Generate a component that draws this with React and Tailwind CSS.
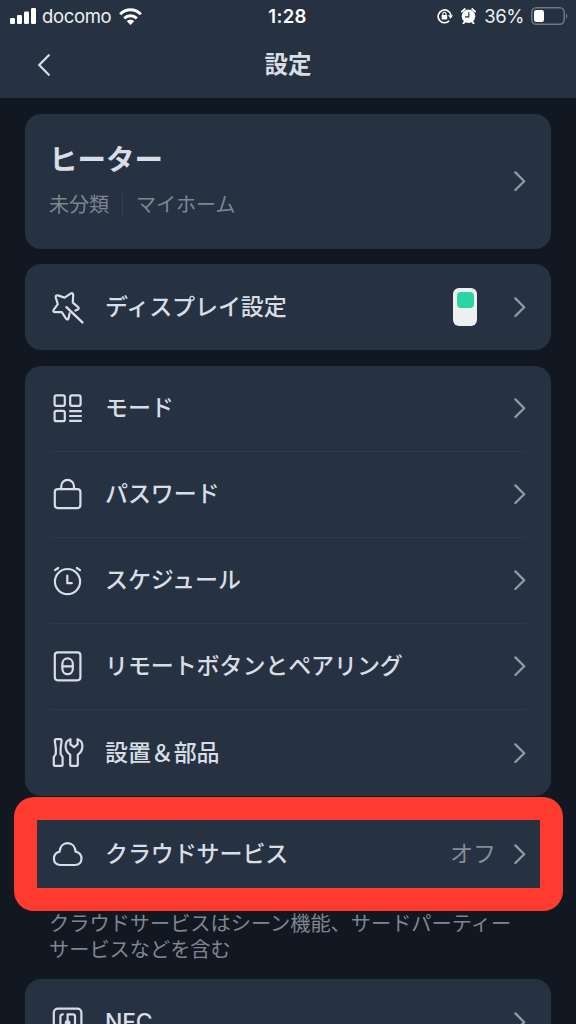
import React from "react";

function Icon({ children }) {
  return (
    <svg
      className="w-[35px] h-[35px] shrink-0"
      viewBox="0 0 35 35"
      fill="none"
      stroke="currentColor"
      strokeWidth="2.2"
      strokeLinecap="round"
      strokeLinejoin="round"
    >
      {children}
    </svg>
  );
}

const DisplayIcon = () => (
  <Icon>
    <path d="M25.4 20.6L27.8 19.4Q29.6 18.2 27.8 16.8L22.8 12.6L23.2 4.8Q22.8 2.2 20.6 3.6L14.6 7.6L7.8 5.4Q5.2 5.2 5.8 7.6L7.8 14.2L3.6 19.8Q2.6 22.2 5.2 22.2L11.8 22.2L16.2 28.8Q17.8 30.6 18.6 28.2L19.6 23.4" />
    <path d="M16.4 17.2L32.4 32.4" strokeWidth="2.4" />
  </Icon>
);

const ModeIcon = () => (
  <Icon>
    <rect x="4.6" y="4.3" width="10.2" height="10.6" rx="1.8" />
    <rect x="20.2" y="4.3" width="10.4" height="10.6" rx="1.8" />
    <rect x="4.6" y="19.8" width="10.2" height="10.4" rx="1.8" />
    <path d="M19.2 20.2H31.8M19.2 25H31.8M19.2 29.8H31.8" strokeLinecap="butt" />
  </Icon>
);

const LockIcon = () => (
  <Icon>
    <rect x="4.8" y="12.1" width="25.6" height="19" rx="3" />
    <path d="M11.2 12.1V9.4a6.4 6.6 0 0 1 12.8 0v2.7" />
  </Icon>
);

const ClockIcon = () => (
  <Icon>
    <circle cx="17.5" cy="18.6" r="12.6" />
    <path d="M17.3 12.6V20.2H21.8M5 7.2L8.2 5M30 7.2L26.8 5" />
  </Icon>
);

const RemoteIcon = () => (
  <Icon>
    <rect x="4.8" y="3.3" width="25.6" height="28" rx="3" />
    <rect x="12.4" y="9.4" width="10.4" height="15.8" rx="5.2" />
    <path d="M12.4 17.3H22.8" />
  </Icon>
);

const ToolsIcon = () => (
  <Icon>
    <path d="M6.2 4.2H10Q11.6 4.2 11.6 5.8L10.6 13.4V19L12.6 22V29.4Q12.6 30.8 11.2 30.8H5.2Q3.8 30.8 3.8 29.4V22L5.8 19V13.4L4.8 5.8Q4.8 4.2 6.2 4.2Z" />
    <path d="M20.2 29.4V19.6C17 17.6 15.6 14.8 15.6 11C15.6 8 17.2 5.2 20.4 4.2V9.4L24 12.2L27.6 9.4V4.2C30.8 5.2 32.4 8 32.4 11C32.4 14.8 31 17.6 27.8 19.6V29.4Q27.8 30.8 26.4 30.8H21.6Q20.2 30.8 20.2 29.4Z" />
  </Icon>
);

const CloudIcon = () => (
  <Icon>
    <path d="M10.4 28C6.4 28 3.9 25.4 3.9 21.6C3.9 18.2 6.2 15.2 9.6 14.6C10 9.6 13.2 6.2 17.6 6.2C22 6.2 25.2 9.6 25.6 14.6C29.2 15.2 31.5 18.2 31.5 21.6C31.5 25.4 29 28 25 28Z" />
  </Icon>
);

const NfcIcon = () => (
  <Icon>
    <rect x="3.8" y="3.6" width="27.6" height="27.6" rx="4" />
    <path d="M12.8 9.4Q10.4 9.4 10.4 11.8V25.4H17.6V18.6M17.6 18V9.4H23Q25 9.4 25 11.4V25.4H23" />
    <circle cx="17.6" cy="17.8" r="1.8" fill="currentColor" />
  </Icon>
);

function Chevron() {
  return (
    <svg
      className="w-3 h-5 shrink-0 text-[#929aa5]"
      viewBox="0 0 12 20"
      fill="none"
      stroke="currentColor"
      strokeWidth="2.3"
      strokeLinecap="round"
      strokeLinejoin="round"
    >
      <path d="M1.4 1.4L10.2 10.2L1.4 19" />
    </svg>
  );
}

function Row({ icon, label, children }) {
  return (
    <div className="h-[86px] flex items-center">
      {icon}
      <span className="ml-5 flex-1 text-[23px] leading-7 font-medium tracking-[-0.1px] whitespace-nowrap">
        {label}
      </span>
      {children}
      <Chevron />
    </div>
  );
}

function Card({ className = "", children }) {
  return (
    <section className={`bg-[#263141] rounded-2xl px-[25px] ${className}`}>
      {children}
    </section>
  );
}

function StatusBar() {
  return (
    <div className="h-8 grid grid-cols-3 items-center pl-[10px] pr-2 text-[18.5px] leading-none text-[#eef0f4]">
      <div className="flex items-center">
        <svg className="w-[26px] h-4" viewBox="0 0 26 16" fill="#fff">
          <rect x="0" y="10" width="5" height="6" rx="1.2" />
          <rect x="7" y="7" width="5" height="9" rx="1.2" />
          <rect x="14" y="3.5" width="5" height="12.5" rx="1.2" />
          <rect x="21" y="0" width="5" height="16" rx="1.2" />
        </svg>
        <span className="ml-[6px] tracking-[-0.35px]">docomo</span>
        <svg className="ml-2 w-[23px] h-[17px]" viewBox="0 0 23 17" fill="none" stroke="#fff" strokeWidth="3">
          <path d="M1.2 6.2C7 .4 16 .4 21.8 6.2M5.2 10.4C8.8 7 14.2 7 17.8 10.4" />
          <path d="M11.5 17L7.8 13.2C9.8 11.4 13.2 11.4 15.2 13.2Z" fill="#fff" stroke="none" />
        </svg>
      </div>
      <div className="-ml-[3px] text-center font-semibold tracking-[0.3px] text-white">1:28</div>
      <div className="flex items-center justify-end">
        <svg className="w-4 h-4" viewBox="0 0 16 16" fill="none" stroke="#fff" strokeWidth="1.6">
          <path d="M12.2 12.8A6.4 6.4 0 1 1 13.9 7.2" />
          <path d="M11 7.2H16L13.6 10.8Z" fill="#fff" stroke="none" />
          <rect x="4.6" y="7" width="5.6" height="4.4" rx=".6" fill="#fff" stroke="none" />
          <path d="M5.8 7.4V5.8a1.6 1.6 0 0 1 3.2 0v1.6" strokeWidth="1.1" />
        </svg>
        <svg className="ml-2 w-[15px] h-4" viewBox="0 0 15 16">
          <circle cx="7.5" cy="8.2" r="6.8" fill="#fff" />
          <path d="M.8 3.6L3.8 1M14.2 3.6L11.2 1M2.4 15.4L4 13.4M12.6 15.4L11 13.4" stroke="#fff" strokeWidth="1.8" strokeLinecap="round" />
          <path d="M7.8 4.2V8.8H4" fill="none" stroke="#263141" strokeWidth="1.2" />
        </svg>
        <span className="ml-2 tracking-[-0.4px]">36%</span>
        <svg className="ml-[7px] w-[37px] h-[18px]" viewBox="0 0 37 18">
          <rect x=".8" y=".8" width="32.4" height="16.4" rx="4.4" fill="none" stroke="#6f7782" strokeWidth="1.5" />
          <rect x="3" y="3" width="10" height="12" rx="2.2" fill="#fff" />
          <path d="M35 6.2C36.8 7.4 36.8 10.6 35 11.8Z" fill="#6f7782" />
        </svg>
      </div>
    </div>
  );
}

const menuItems = [
  { label: "モード", icon: <ModeIcon /> },
  { label: "パスワード", icon: <LockIcon /> },
  { label: "スケジュール", icon: <ClockIcon /> },
  { label: "リモートボタンとペアリング", icon: <RemoteIcon /> },
  { label: "設置＆部品", icon: <ToolsIcon /> },
];

export default function App() {
  return (
    <div className="w-[576px] h-[1024px] overflow-hidden bg-[#111822] text-[#d8dde6] font-[Inter,'Noto_Sans_CJK_JP',sans-serif]">
      <header className="h-[98px] bg-[#263141]">
        <StatusBar />
        <div className="h-[66px] px-[38px] grid grid-cols-3 items-center">
          <svg className="w-3 h-[22px]" viewBox="0 0 12 22" fill="none" stroke="currentColor" strokeWidth="2.2" strokeLinecap="round" strokeLinejoin="round">
            <path d="M10.8 1.2L1.2 11L10.8 20.8" />
          </svg>
          <h1 className="text-center text-[23.5px] leading-none font-bold">設定</h1>
        </div>
      </header>

      <main className="px-[25px] pt-[15.5px] flex flex-col">
        <Card className="h-[135px] flex items-center">
          <div className="flex-1 -ml-px pb-1">
            <h2 className="text-[28.5px] leading-10 font-bold">ヒーター</h2>
            <div className="mt-[11px] flex items-center text-[20px] leading-7 text-[#7f8691]">
              <span>未分類</span>
              <span className="mx-[13px] w-px h-[23px] bg-[#354050]" />
              <span>マイホーム</span>
            </div>
          </div>
          <Chevron />
        </Card>

        <Card className="mt-[15.5px]">
          <Row label="ディスプレイ設定" icon={<DisplayIcon />}>
            <div className="mr-[37px] w-6 h-[38px] rounded-md bg-[#eeeff0] pt-1 flex justify-center">
              <div className="w-[17px] h-4 rounded-[4px] bg-[#2bd4a4]" />
            </div>
          </Row>
        </Card>

        <Card className="mt-[15.5px] divide-y divide-[#303b4a]">
          {menuItems.map((item) => (
            <Row key={item.label} label={item.label} icon={item.icon} />
          ))}
        </Card>

        {/* Highlighted cloud row */}
        <div className="relative mt-[15.5px]">
          <Card>
            <Row label="クラウドサービス" icon={<CloudIcon />}>
              <span className="mr-[18px] text-[23px] leading-7 text-[#858c97]">オフ</span>
            </Row>
          </Card>
          <div className="absolute -left-[11px] -top-[14px] w-[549px] h-[114px] rounded-[20px] border-[23px] border-[#ff3b30]" />
        </div>
        <p className="mt-[14px] ml-6 text-[20.2px] leading-[26px] text-[#7f8691] whitespace-nowrap">
          クラウドサービスはシーン機能、サードパーティー
          <br />
          サービスなどを含む
        </p>

        <Card className="mt-4">
          <Row label="NFC" icon={<NfcIcon />} />
        </Card>
      </main>
    </div>
  );
}
